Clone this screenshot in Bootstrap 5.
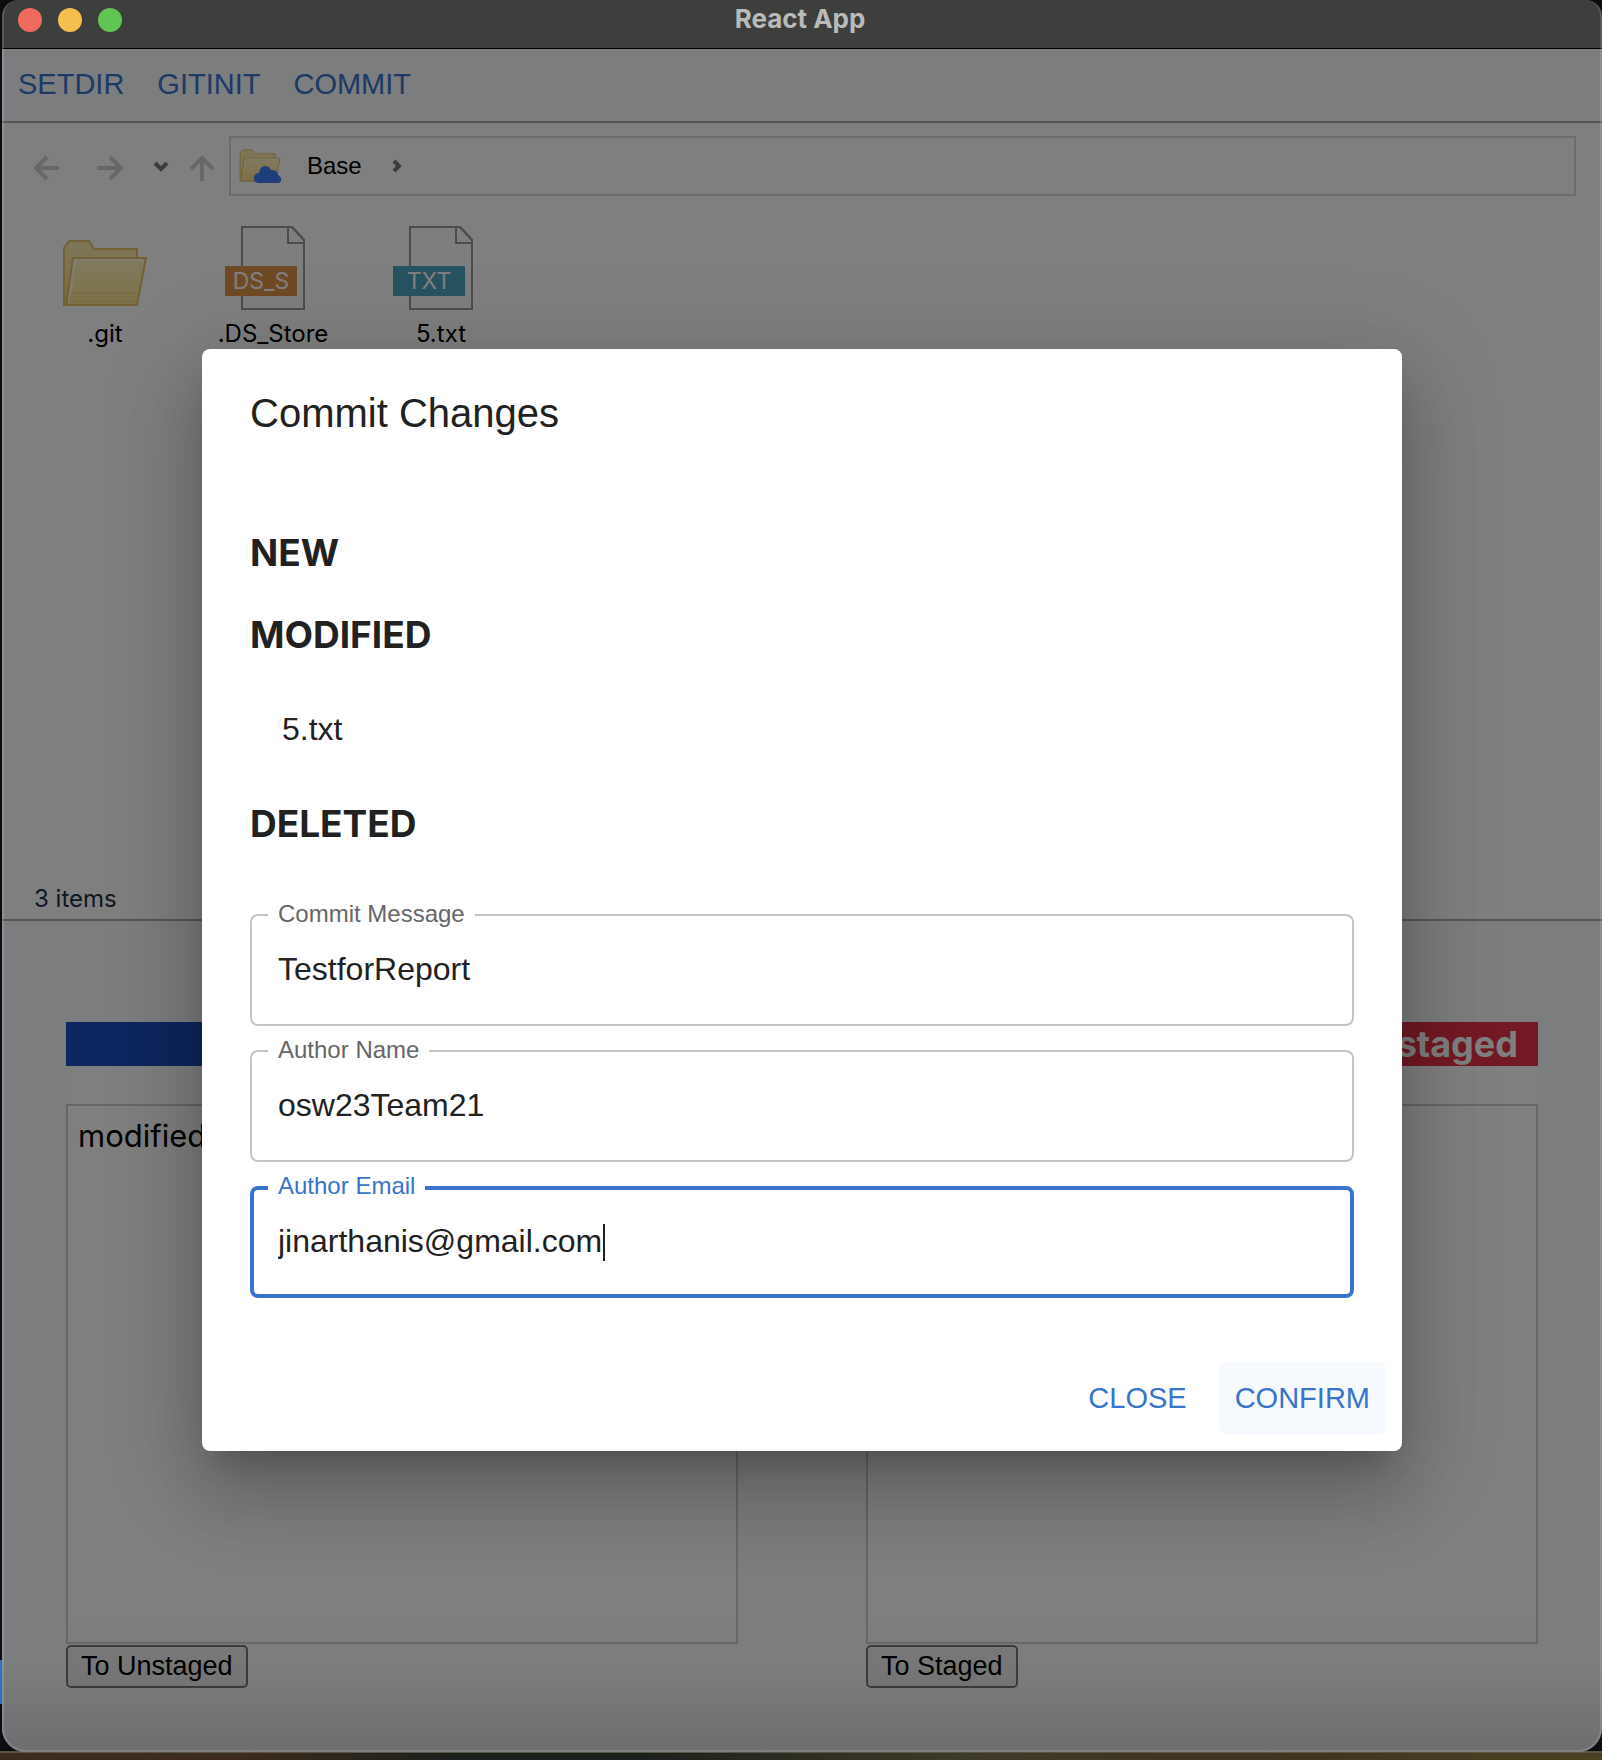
<!DOCTYPE html>
<html lang="en">
<head>
<meta charset="utf-8">
<meta name="viewport" content="width=device-width, initial-scale=1">
<title>React App</title>
<link rel="stylesheet" href="https://cdn.jsdelivr.net/npm/bootstrap@5.3.0/dist/css/bootstrap.min.css">
<style>
  :root { --helv: "Liberation Sans", Arial, sans-serif; --ui: Inter, sans-serif; --blue: #3874cb; }
  body { font-family: var(--helv); color: #000; line-height: 1.5; min-height: 100vh; padding: 0 0 8px 2px;
    background: linear-gradient(#5a5646, #5a5646) left bottom 7px / 100% 2px no-repeat,
      linear-gradient(90deg, #3a2a20, #3c2b1c 15%, #1c201c 28%, #1c201c 40%, #3e3a28 60%, #40341f 80%, #4c4022) bottom / 100% 8px no-repeat,
      linear-gradient(#2f6fc4, #2f6fc4) left 0 bottom 56px / 2px 44px no-repeat, #0c0d10; }
  .app-window { position: relative; border-radius: 16px 16px 24px 24px; overflow: hidden; min-height: calc(100vh - 8px); }
  .app-window::after { content: ""; position: absolute; inset: 0; border: 2px solid rgba(255,255,255,.14); border-top: 0; border-radius: inherit; pointer-events: none; z-index: 5; }
  .title-bar { height: 49px; background: #3d3f3d; border-bottom: 1px solid #000; padding: 0 20px 0 16px; }
  .title-bar h1 { font: 700 26px/38px var(--ui); color: #b9bbb9; margin: 0; }
  .dot { width: 24px; height: 24px; border-radius: 50%; }
  .dots { gap: 16px; padding-top: 8px; }
  .side { flex: 1 1 0; }
  .page-body { background: #f8faff; position: relative; }
  .toolbar { height: 74px; border-bottom: 2px solid #aaa; padding: 0 2px 2px; gap: 5px; }
  .flat-btn { font: 400 29px/49px var(--helv); color: var(--blue); background: none; border: 0; border-radius: 8px; padding: 12px 16px; }
  .toolbar .flat-btn { padding: 10px 14px; }
  .browser { background: #fff; min-height: 798px; border-bottom: 2px solid #aaa; padding: 13px 26px 2px 19px; }
  .nav-icons { width: 208px; }
  .path-bar { border: 2px solid #d9d9d9; height: 60px; padding: 0 8px; font-size: 24px; }
  .files { padding-top: 26px; }
  .file { width: 168px; font: 400 24px/32px var(--ui); }
  .file svg { display: block; margin: 0 auto 6px; }
  .file svg text { font: 400 23px var(--ui); fill: #fff; }
  .count { font: 400 24px/36px var(--ui); color: #22304a; padding: 0 13px; }
  .stages { padding: 101px 64px 63px; gap: 128px; }
  .stage { flex: 1 1 0; }
  .stage h2 { font: 700 36px/44px var(--ui); height: 44px; color: #fff; margin: 0; padding: 0 20px; text-align: right; }
  .stage-gap { height: 38px; background: #fff; }
  .stage-box { height: 540px; border: 2px solid #ccc; padding-bottom: 20px; }
  .stage-list { background: #fff; height: 100%; padding: 6px 10px; font: 400 31px/48px var(--ui); }
  .plain-btn { font: 400 27px/31px var(--helv); color: #000; background: #efefef; border: 2px solid #767676; border-radius: 5px; padding: 4px 13px; margin-top: 1px; height: 43px; }
  .veil { position: absolute; inset: 0; padding-bottom: 2px; background: linear-gradient(transparent, transparent calc(100% - 90px), rgba(0,0,0,.12)), rgba(0,0,0,.5); }
  .dialog-card { width: 75%; min-width: 600px; background: #fff; border-radius: 8px; color: #212121; padding: 32px 0 16px;
    box-shadow: 0 22px 30px -14px rgba(0,0,0,.2), 0 48px 76px 6px rgba(0,0,0,.14), 0 18px 92px 16px rgba(0,0,0,.12); }
  .dialog-main { padding: 0 48px; }
  .dialog-main h2 { font: 400 40px/64px var(--helv); margin: 0 0 86px; }
  .dialog-main h3 { font: 700 37px/44px var(--ui); margin: 0 0 38px; }
  .dialog-main ul { padding: 5px 32px 0; margin: 0 0 44px; list-style: none; font-size: 32px; line-height: 58px; }
  .dialog-main h3.last { margin-bottom: 68px; }
  .outlined { position: relative; margin-bottom: 24px; }
  .outlined label { position: absolute; top: -18px; left: 18px; padding: 0 10px; background: #fff; font-size: 24px; line-height: 36px; color: #666; }
  .outlined .form-control { height: 112px; border: 2px solid #c4c4c4; border-radius: 8px; padding: 0 26px; font: 400 32px/46px var(--helv); color: #212121; background: #fff; box-shadow: none; }
  .outlined.active label { color: var(--blue); }
  .outlined.active .form-control { border: 4px solid var(--blue); padding: 0 24px; }
  .caret { position: absolute; left: 353px; top: 38px; width: 2px; height: 37px; background: #212121; }
  .dialog-foot { padding: 40px 16px 0; gap: 16px; }
  .flat-btn.hot { background: #f6f9fd; }
</style>
<script src="https://cdn.jsdelivr.net/npm/bootstrap@5.3.0/dist/js/bootstrap.bundle.min.js"></script>
</head>
<body>
<svg width="0" height="0" class="position-absolute" aria-hidden="true">
  <defs>
    <linearGradient id="fold" x1="0" y1="0" x2="0" y2="1"><stop offset="0" stop-color="#fff3c0"/><stop offset="1" stop-color="#fbe38e"/></linearGradient>
    <linearGradient id="foldback" x1="0" y1="0" x2="0" y2="1"><stop offset="0" stop-color="#fdeeb4"/><stop offset="1" stop-color="#f5d987"/></linearGradient>
    <symbol id="folder" viewBox="0 0 86 68">
      <path d="M2 66V9l5-7h20l5 8h43v56z" fill="url(#foldback)" stroke="#e2c266" stroke-width="2"/>
      <path d="M4 66 11 19h73l-9 47z" fill="url(#fold)" stroke="#e2c266" stroke-width="2"/>
      <path d="M7 63 13 21h68" fill="none" stroke="#fffbe6" stroke-width="2"/>
      <path d="M8 54h67M7 58h67M7 62h67" stroke="#eed481" stroke-width="1"/>
    </symbol>
    <symbol id="sheet" viewBox="0 0 64 84">
      <path d="M1 1h50l12 13v69H1z" fill="#fbfeff" stroke="#999" stroke-width="2"/>
      <path d="M47 1v16h16M51 1l12 13" fill="none" stroke="#999" stroke-width="2"/>
    </symbol>
  </defs>
</svg>
<div class="app-window d-flex flex-column">
  <header class="title-bar d-flex align-items-start">
    <div class="side dots d-flex">
      <span class="dot" style="background:#ee6a5f"></span><span class="dot" style="background:#f5bf4f"></span><span class="dot" style="background:#61c554"></span>
    </div>
    <h1>React App</h1>
    <div class="side"></div>
  </header>
  <div class="page-body flex-grow-1">
    <nav class="toolbar d-flex align-items-center">
      <button class="flat-btn" type="button">SETDIR</button>
      <button class="flat-btn" type="button">GITINIT</button>
      <button class="flat-btn" type="button">COMMIT</button>
    </nav>
    <main>
      <section class="browser d-flex flex-column">
        <div class="d-flex align-items-center">
          <div class="nav-icons flex-shrink-0">
            <svg class="d-block" width="208" height="60" viewBox="21 136 208 60" fill="none" stroke="#cfcfcf" stroke-width="4" role="img" aria-label="Back, forward, history, up">
              <path d="M59 168H37M47 157 36 168l11 11M97 168h23M110 157l11 11-11 11M202 181v-22M191 169l11-11 11 11"/>
              <path d="m155 163 6 6 6-6" stroke="#777"/>
            </svg>
          </div>
          <div class="path-bar flex-grow-1 d-flex align-items-center">
            <svg width="44" height="36" viewBox="0 0 44 36" aria-hidden="true"><use href="#folder" x="0" y="1" width="42" height="33"/>
              <path d="M19 35q-5-1-4-6 1-4 5-4 1-7 6-7 4 0 6 4 7 0 7 5 4 2 3 6-1 2-3 2z" fill="#3e7cf4"/></svg>
            <span class="ps-4">Base</span>
            <svg class="ms-4" width="22" height="24" viewBox="1 0 22 24" fill="none" stroke="#777" stroke-width="4" aria-hidden="true"><path d="m9 7 5 5-5 5"/></svg>
          </div>
        </div>
        <div class="files d-flex text-center">
          <div class="file"><svg width="86" height="90" viewBox="0 0 86 90" aria-hidden="true"><use href="#folder" y="17" width="86" height="68"/></svg>.git</div>
          <div class="file"><svg width="98" height="90" viewBox="0 0 98 90"><use href="#sheet" x="17" y="4" width="64" height="84"/><path d="M1 44h72v30H1z" fill="#e0924a"/><text x="37" y="67" text-anchor="middle">DS_S</text></svg>.DS_Store</div>
          <div class="file"><svg width="98" height="90" viewBox="0 0 98 90"><use href="#sheet" x="17" y="4" width="64" height="84"/><path d="M1 44h72v30H1z" fill="#4fa4be"/><text x="37" y="67" text-anchor="middle">TXT</text></svg>5.txt</div>
        </div>
        <div class="count mt-auto">3 items</div>
      </section>
      <section class="stages d-flex">
        <div class="stage">
          <h2 style="background:#1c4cbf">Staged</h2>
          <div class="stage-gap"></div>
          <div class="stage-box"><div class="stage-list">modified</div></div>
          <button class="plain-btn" type="button">To Unstaged</button>
        </div>
        <div class="stage">
          <h2 style="background:#e63348">Unstaged</h2>
          <div class="stage-gap"></div>
          <div class="stage-box"><div class="stage-list"></div></div>
          <button class="plain-btn" type="button">To Staged</button>
        </div>
      </section>
    </main>
    <div class="veil d-flex align-items-center justify-content-center">
      <form class="dialog-card" role="dialog" aria-labelledby="dlg">
        <div class="dialog-main">
          <h2 id="dlg">Commit Changes</h2>
          <h3>NEW</h3>
          <h3>MODIFIED</h3>
          <ul><li>5.txt</li></ul>
          <h3 class="last">DELETED</h3>
          <div class="outlined"><input class="form-control" id="msg" type="text" value="TestforReport"><label for="msg">Commit Message</label></div>
          <div class="outlined"><input class="form-control" id="author" type="text" value="osw23Team21"><label for="author">Author Name</label></div>
          <div class="outlined active"><input class="form-control" id="mail" type="email" value="jinarthanis@gmail.com"><label for="mail">Author Email</label><span class="caret"></span></div>
        </div>
        <div class="dialog-foot d-flex justify-content-end">
          <button class="flat-btn" type="button">CLOSE</button>
          <button class="flat-btn hot" type="button">CONFIRM</button>
        </div>
      </form>
    </div>
  </div>
</div>
</body>
</html>
